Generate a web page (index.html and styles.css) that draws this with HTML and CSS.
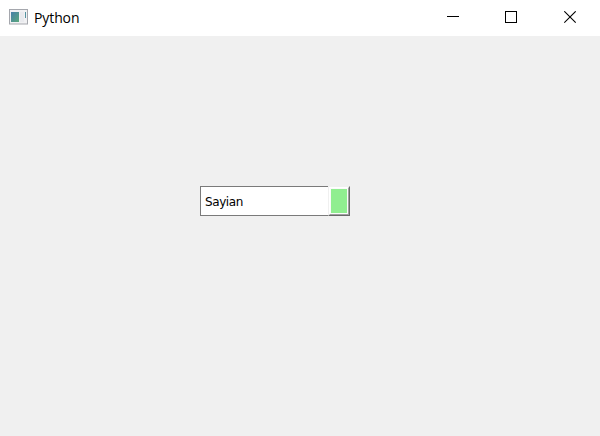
FILE: index.html
```html
<!DOCTYPE html>
<html lang="en">
<head>
<meta charset="utf-8">
<title>Python</title>
<link rel="stylesheet" href="styles.css">
</head>
<body>
<div class="window">
  <header class="titlebar">
    <svg class="app-icon" width="20" height="17" viewBox="0 0 20 17">
      <defs>
        <linearGradient id="pane" x1="0" y1="0" x2="1" y2="1">
          <stop offset="0" stop-color="#477fa8"/>
          <stop offset="1" stop-color="#5aa87c"/>
        </linearGradient>
      </defs>
      <rect x="0.5" y="0.5" width="18" height="14.5" fill="#f1f1f3" stroke="#a5a7ad"/>
      <rect x="2" y="3" width="8" height="10" fill="url(#pane)"/>
      <rect x="11" y="3" width="4" height="10" fill="#e9eaee"/>
      <rect x="16" y="3" width="1" height="6" fill="#5593a0"/>
    </svg>
    <h1 class="title">Python</h1>
    <div class="controls">
      <svg width="13" height="13" viewBox="0 0 13 13" shape-rendering="crispEdges"><path d="M0 5.5H12" stroke="#000"/></svg>
      <svg width="13" height="13" viewBox="0 0 13 13" shape-rendering="crispEdges"><path d="M.5 .5H11.5V11.5H.5Z" fill="none" stroke="#000"/></svg>
      <svg width="13" height="13" viewBox="0 0 13 13"><path d="M0.3 0.3L11.7 11.7M11.7 0.3L0.3 11.7" stroke="#000" stroke-width="1.1"/></svg>
    </div>
  </header>
  <main class="content">
    <div class="combo">
      <span class="value">Sayian</span>
      <span class="drop"><span class="face"></span></span>
    </div>
  </main>
</div>
</body>
</html>
```
FILE: styles.css
```css
* { box-sizing: border-box; }
body { margin: 0; }
.window {
  display: flex;
  flex-direction: column;
  width: 600px;
  height: 436px;
  overflow: hidden;
  background: #f0f0f0;
  color: #000;
}
.titlebar {
  display: flex;
  align-items: center;
  height: 36px;
  flex: none;
  padding: 0 23px 0 9px;
  background: #fff;
}
.app-icon { margin-top: -1px; }
.title {
  margin: 0 0 0 5px;
  font: 400 14px/20px "Open Sans", "Noto Sans", sans-serif;
  letter-spacing: -0.1px;
}
.controls {
  display: flex;
  gap: 46px;
  margin: -1px 0 0 auto;
}
.controls svg { display: block; }
.controls svg:first-child { margin-right: -1px; }
.content {
  flex: 1;
  padding: 150px 0 0 200px;
}
.combo {
  display: flex;
  width: 150px;
  height: 30px;
}
.value {
  flex: 1;
  padding-left: 4px;
  border: 1px solid #7a7a7a;
  border-right: 0;
  background: #fff;
  font: 12px/30px "DejaVu Sans", sans-serif;
  letter-spacing: -0.4px;
}
.drop {
  display: flex;
  width: 22px;
  border: 1px solid;
  border-color: #f0f0f0 #696969 #696969 #f0f0f0;
}
.face {
  flex: 1;
  border: 1px solid;
  border-color: #fff #a0a0a0 #a0a0a0 #fff;
  background: #90ee90;
  box-shadow: inset 0 0 0 1px #fafafa;
}
```
